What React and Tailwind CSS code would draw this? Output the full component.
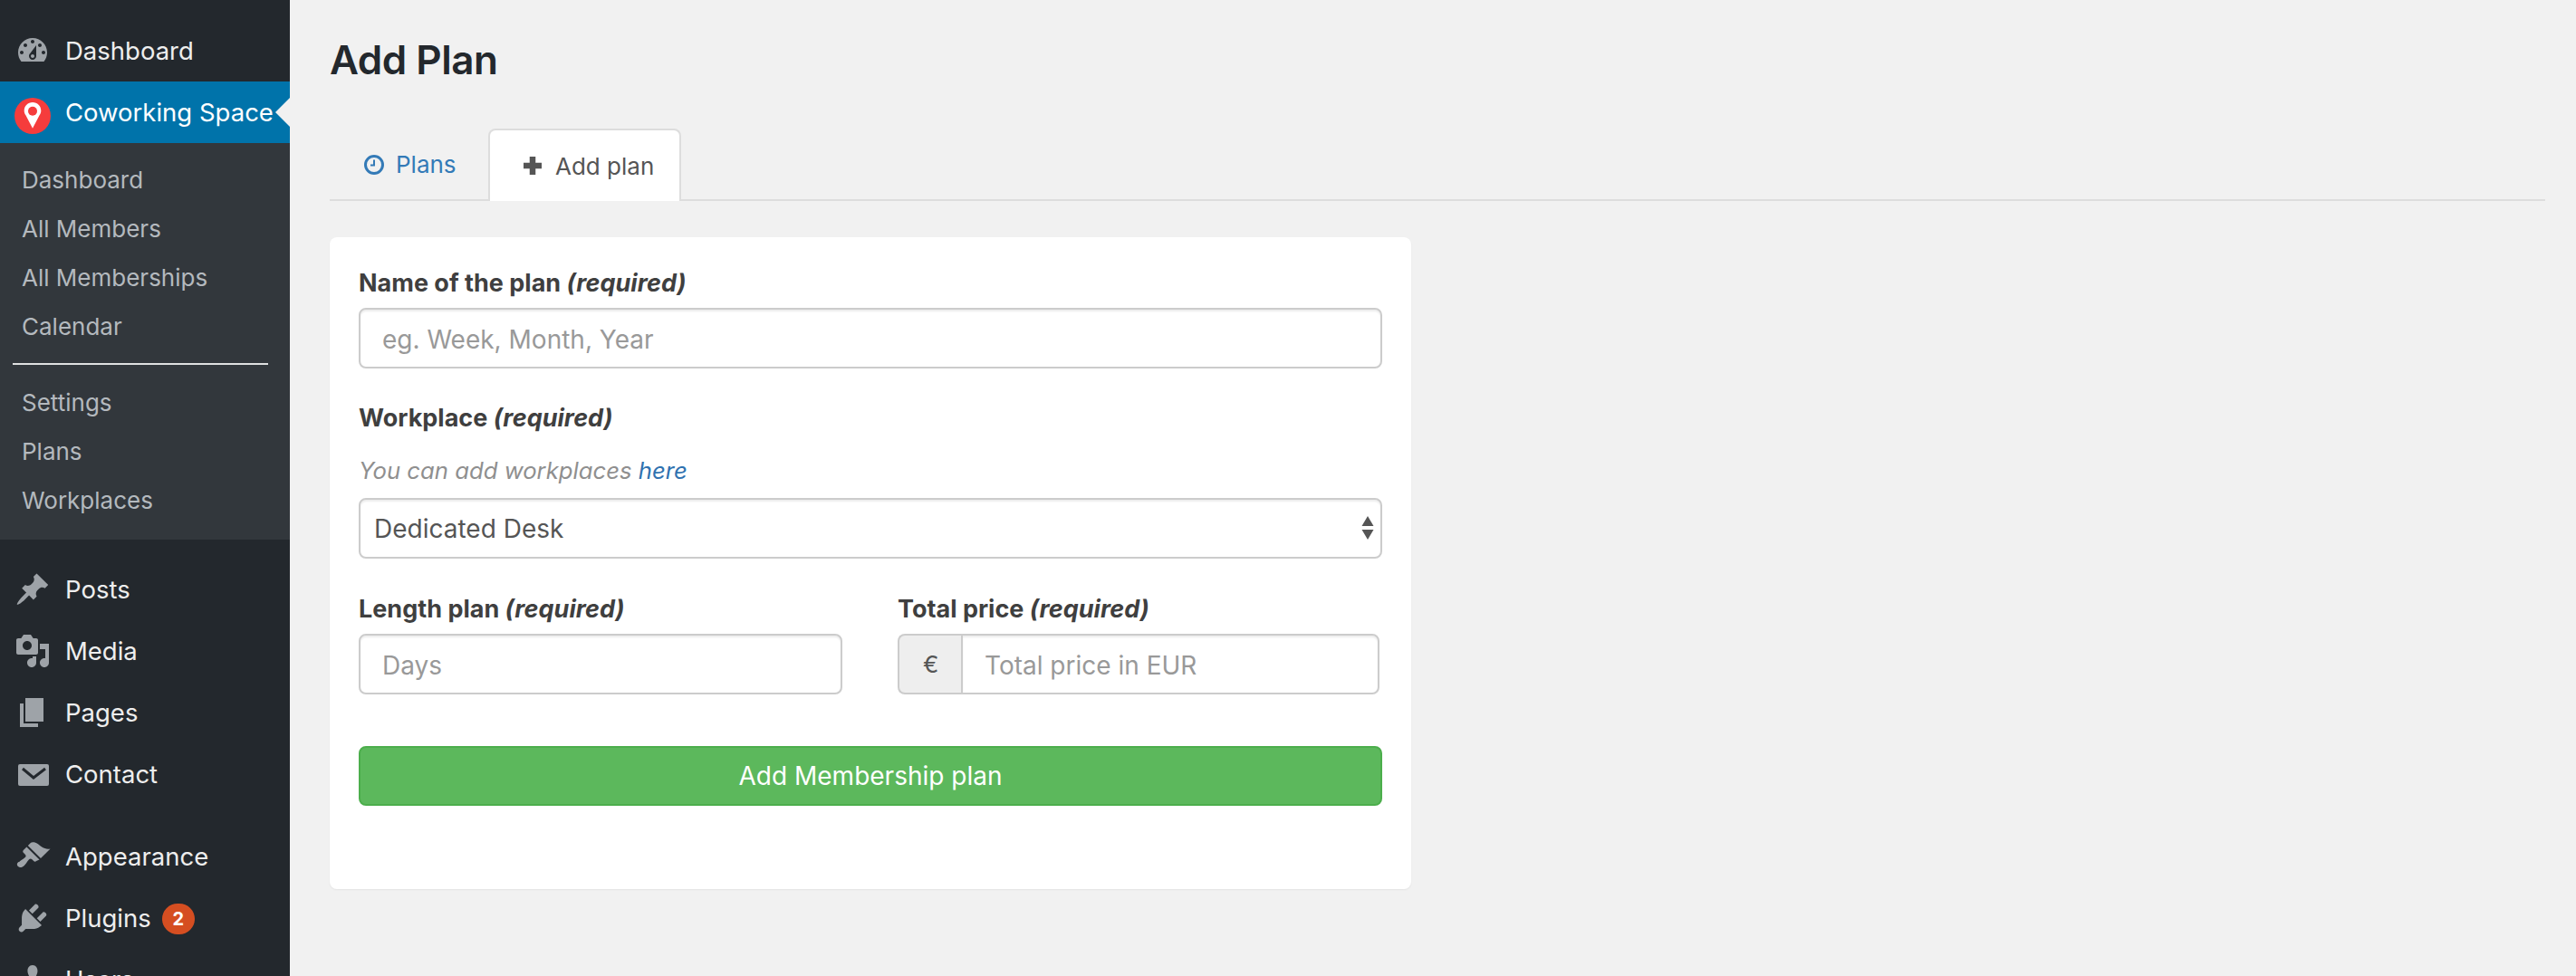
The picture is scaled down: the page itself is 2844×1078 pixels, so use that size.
import React from "react";

const FONT = "font-['Inter','Liberation_Sans',sans-serif]";

// Dashicons-style admin menu glyphs (20x20 grid, drawn at 40px)
const ICONS = {
  dashboard:
    "M3.76 16h12.48c1.1-1.37 1.76-3.11 1.76-5 0-4.42-3.58-8-8-8s-8 3.58-8 8c0 1.89.66 3.63 1.76 5zM10 4c.55 0 1 .45 1 1s-.45 1-1 1-1-.45-1-1 .45-1 1-1zM6 6c.55 0 1 .45 1 1s-.45 1-1 1-1-.45-1-1 .45-1 1-1zm8 0c.55 0 1 .45 1 1s-.45 1-1 1-1-.45-1-1 .45-1 1-1zm-5.37 5.55L12 7v6c0 1.1-.9 2-2 2s-2-.9-2-2c0-.57.24-1.08.63-1.45zM4 10c.55 0 1 .45 1 1s-.45 1-1 1-1-.45-1-1 .45-1 1-1zm12 0c.55 0 1 .45 1 1s-.45 1-1 1-1-.45-1-1 .45-1 1-1zm-5 3c0-.55-.45-1-1-1s-1 .45-1 1 .45 1 1 1 1-.45 1-1z",
  posts:
    "M10.44 3.02l1.82-1.82 6.36 6.35-1.83 1.82c-1.05-.68-2.48-.57-3.41.36l-.75.75c-.92.93-1.04 2.35-.35 3.41l-1.83 1.82-2.41-2.41-2.8 2.79c-.42.42-3.38 2.71-3.8 2.29s1.86-3.39 2.28-3.81l2.79-2.79L4.1 9.36l1.83-1.82c1.05.69 2.48.57 3.4-.36l.75-.75c.93-.92 1.05-2.35.36-3.41z",
  media:
    "M13 11V4c0-.55-.45-1-1-1h-1.67L9 1H5L3.67 3H2c-.55 0-1 .45-1 1v7c0 .55.45 1 1 1h10c.55 0 1-.45 1-1zM7 4.5c1.38 0 2.5 1.12 2.5 2.5S8.38 9.5 7 9.5 4.5 8.38 4.5 7 5.62 4.5 7 4.5zM14 6h5v10.5c0 1.38-1.12 2.5-2.5 2.5S14 17.88 14 16.5s1.12-2.5 2.5-2.5c.17 0 .34.02.5.05V9h-3V6zm-4 8.05V13h2v3.5c0 1.38-1.12 2.5-2.5 2.5S7 17.88 7 16.5 8.12 14 9.5 14c.17 0 .34.02.5.05z",
  pages: "M6 15V2h10v13H6zm-1 1h8v2H3V5h2v11z",
  appearance:
    "M14.48 11.06L7.41 3.99l1.5-1.5c.5-.56 2.3-.47 3.51.32 1.21.8 1.43 1.28 2.91 2.1 1.18.64 2.45 1.26 4.45.85zm-.71.71L6.7 4.7 4.93 6.47c-.39.39-.39 1.02 0 1.41l1.06 1.06c.39.39.39 1.03 0 1.42-.6.6-1.43 1.11-2.21 1.69-.35.26-.7.53-1.01.84C1.43 13.23.99 14.5 2 15.5c1 1 2.28.55 3.62-.79.31-.31.58-.66.84-1.01.58-.78 1.09-1.61 1.69-2.21.39-.39 1.02-.39 1.41 0l1.06 1.06c.39.39 1.02.39 1.41 0z",
  plugins:
    "M13.11 4.36L9.87 7.6 8 5.73l3.24-3.24c.35-.34 1.05-.2 1.56.32.52.51.66 1.21.31 1.55zm-8 1.77l.91-1.12 9.01 9.01-1.19.84c-.71.71-2.63 1.16-3.82 1.16H6.14L4.9 17.26c-.59.59-1.54.59-2.12 0-.59-.58-.59-1.53 0-2.12l1.24-1.24v-3.88c0-1.13.4-3.19 1.09-3.89zm7.26 3.97l3.24-3.24c.34-.35 1.04-.21 1.55.31.52.51.66 1.21.31 1.55l-3.24 3.25z",
  users:
    "M10 9.25c-2.27 0-2.73-3.44-2.73-3.44C7 4.02 7.82 2 9.97 2c2.16 0 2.98 2.02 2.71 3.81 0 0-.41 3.44-2.68 3.44zm0 2.57L12.72 10c2.39 0 4.52 2.33 4.52 4.53v2.49s-3.65 1.13-7.24 1.13c-3.65 0-7.24-1.13-7.24-1.13v-2.49c0-2.25 1.94-4.48 4.47-4.48z",
};

function MenuIcon({ name }) {
  return (
    <svg viewBox="0 0 20 20" className="w-10 h-10 shrink-0 fill-[#9ea3a8]">
      <path d={ICONS[name]} />
    </svg>
  );
}

function MailIcon() {
  return (
    <svg viewBox="0 0 40 40" className="w-10 h-10 shrink-0">
      <rect x="4" y="9" width="34" height="24" rx="2" fill="#9ea3a8" />
      <path d="M9 14l12 10 13-10" fill="none" stroke="#23282d" strokeWidth="3" />
    </svg>
  );
}

function MenuItem({ icon, label, children }) {
  return (
    <div className="flex items-center h-[68px] pl-4 text-[27.5px] text-[#eeeeee]">
      {icon === "mail" ? <MailIcon /> : <MenuIcon name={icon} />}
      <span className="ml-4 pt-[2px]">{label}</span>
      {children}
    </div>
  );
}

function SubItem({ label }) {
  return <div className="h-[54px] flex items-center pl-6 text-[26px] text-[#b4b9be]">{label}</div>;
}

function Sidebar() {
  return (
    <aside className="w-80 shrink-0 h-full bg-[#23282d] pt-[22px] overflow-hidden">
      <MenuItem icon="dashboard" label="Dashboard" />

      {/* Active plugin menu */}
      <div className="relative flex items-center h-[68px] pl-4 bg-[#0073aa] text-[27.5px] text-white">
        <svg viewBox="0 0 40 40" className="w-10 h-10 shrink-0 mt-2">
          <circle cx="20" cy="20" r="20" fill="#f53c3c" />
          <path d="M20 5c-5.200 0-9.300 4-9.300 9.300 0 2 .7 3.600 1.700 5L20 33.700l7.600-14.400c1-1.400 1.700-3 1.700-5 0-5.300-4.100-9.300-9.300-9.300z" fill="#ffffff" />
          <circle cx="20" cy="14.700" r="5" fill="#f53c3c" />
        </svg>
        <span className="ml-4 pt-[2px] whitespace-nowrap">Coworking Space</span>
        <div className="absolute right-0 top-[18px] w-0 h-0 border-y-[16px] border-y-transparent border-r-[16px] border-r-[#f1f1f1]" />
      </div>

      {/* Submenu */}
      <div className="bg-[#32373c] h-[438px] pt-[13px]">
        <SubItem label="Dashboard" />
        <SubItem label="All Members" />
        <SubItem label="All Memberships" />
        <SubItem label="Calendar" />
        <div className="h-[30px] flex items-center pl-[14px]">
          <div className="w-[282px] h-0.5 bg-[#dfe0e1]" />
        </div>
        <SubItem label="Settings" />
        <SubItem label="Plans" />
        <SubItem label="Workplaces" />
      </div>

      <div className="pt-[21px]">
        <MenuItem icon="posts" label="Posts" />
        <MenuItem icon="media" label="Media" />
        <MenuItem icon="pages" label="Pages" />
        <MenuItem icon="mail" label="Contact" />
      </div>
      <div className="pt-[23px]">
        <MenuItem icon="appearance" label="Appearance" />
        <MenuItem icon="plugins" label="Plugins">
          <span className="ml-3 mt-[2px] w-9 h-[34px] rounded-full bg-[#d54e21] text-white text-[20px] font-bold flex items-center justify-center">2</span>
        </MenuItem>
        <MenuItem icon="users" label="Users" />
      </div>
    </aside>
  );
}

function Tabs() {
  return (
    <div className="flex h-[80px] mt-[48px] border-b-2 border-[#dddddd] pl-[2px] text-[26px]">
      <div className="flex items-center w-[173px] h-[78px] pl-[35px] text-[#337ab7]">
        <svg viewBox="0 0 24 24" className="w-[24px] h-[24px] shrink-0 mt-px">
          <circle cx="12" cy="12" r="9.500" fill="none" stroke="#337ab7" strokeWidth="3" />
          <path d="M12 6.500v6H8" fill="none" stroke="#337ab7" strokeWidth="2" />
        </svg>
        <span className="ml-3">Plans</span>
      </div>
      <div className="flex items-center w-[213px] h-[80px] pl-[36px] bg-white border-2 border-b-0 border-[#dddddd] rounded-t-lg text-[#555555]">
        <svg viewBox="0 0 22 22" className="w-[22px] h-[22px] shrink-0">
          <path d="M11 1v20M1 11h20" fill="none" stroke="#555555" strokeWidth="6.500" />
        </svg>
        <span className="ml-[14px]">Add plan</span>
      </div>
    </div>
  );
}

function Label({ text, className = "" }) {
  return (
    <label className={`block text-[27px] leading-[36px] font-bold text-[#3f3f3f] ${className}`}>
      {text} <em className="italic">(required)</em>
    </label>
  );
}

const inputCls =
  "block w-full h-[67px] px-6 bg-white border-2 border-[#cccccc] rounded-lg text-[28px] text-[#555555] placeholder:text-[#999999] outline-none shadow-[inset_0_2px_2px_rgba(0,0,0,0.075)]";

function PlanForm() {
  return (
    <div className="w-[1194px] h-[720px] mt-10 bg-white rounded-lg shadow-[0_1px_2px_rgba(0,0,0,0.06)] px-8 pt-[33px]">
      <Label text="Name of the plan" />
      <input className={`${inputCls} mt-[9px] pt-[2px]`} placeholder="eg. Week, Month, Year" />

      <Label text="Workplace" className="mt-[37px]" />
      <p className="mt-[22px] text-[25.7px] leading-[36px] italic text-[#8f8f8f]">
        You can add workplaces <a className="text-[#2f72b0]">here</a>
      </p>
      <div className="relative mt-[12px]">
        <select defaultValue="Dedicated Desk" className={`${inputCls} appearance-none pl-[15px]`}>
          <option>Dedicated Desk</option>
        </select>
        <svg viewBox="0 0 14 26" className="absolute right-[9px] top-[20px] w-[14px] h-[26px] fill-[#555555]">
          <path d="M7 0l6.500 11H.5zM.5 15h13L7 26z" />
        </svg>
      </div>

      <div className="flex gap-[61px] mt-[38px]">
        <div className="w-[534px]">
          <Label text="Length plan" />
          <input className={`${inputCls} mt-[9px] pt-[2px]`} placeholder="Days" />
        </div>
        <div className="w-[532px]">
          <Label text="Total price" />
          <div className="flex mt-[9px]">
            <span className="flex items-center w-[70px] h-[67px] pl-[26px] bg-[#eeeeee] border-2 border-r-0 border-[#cccccc] rounded-l-lg text-[26px] text-[#555555]">€</span>
            <input className={`${inputCls} pt-[2px] rounded-l-none flex-1 min-w-0`} placeholder="Total price in EUR" />
          </div>
        </div>
      </div>

      <button className="block w-full h-[66px] mt-[57px] bg-[#5cb85c] border-2 border-[#4cae4c] rounded-lg text-[28px] text-white">
        Add Membership plan
      </button>
    </div>
  );
}

export default function App() {
  return (
    <div className={`flex h-screen overflow-hidden bg-[#f1f1f1] ${FONT}`}>
      <Sidebar />
      <main className="flex-1 pl-[44px] pr-[34px] min-w-0">
        <h1 className="mt-[38px] text-[44px] leading-[56px] font-semibold tracking-[-0.5px] text-[#23282d]">Add Plan</h1>
        <Tabs />
        <PlanForm />
      </main>
    </div>
  );
}
